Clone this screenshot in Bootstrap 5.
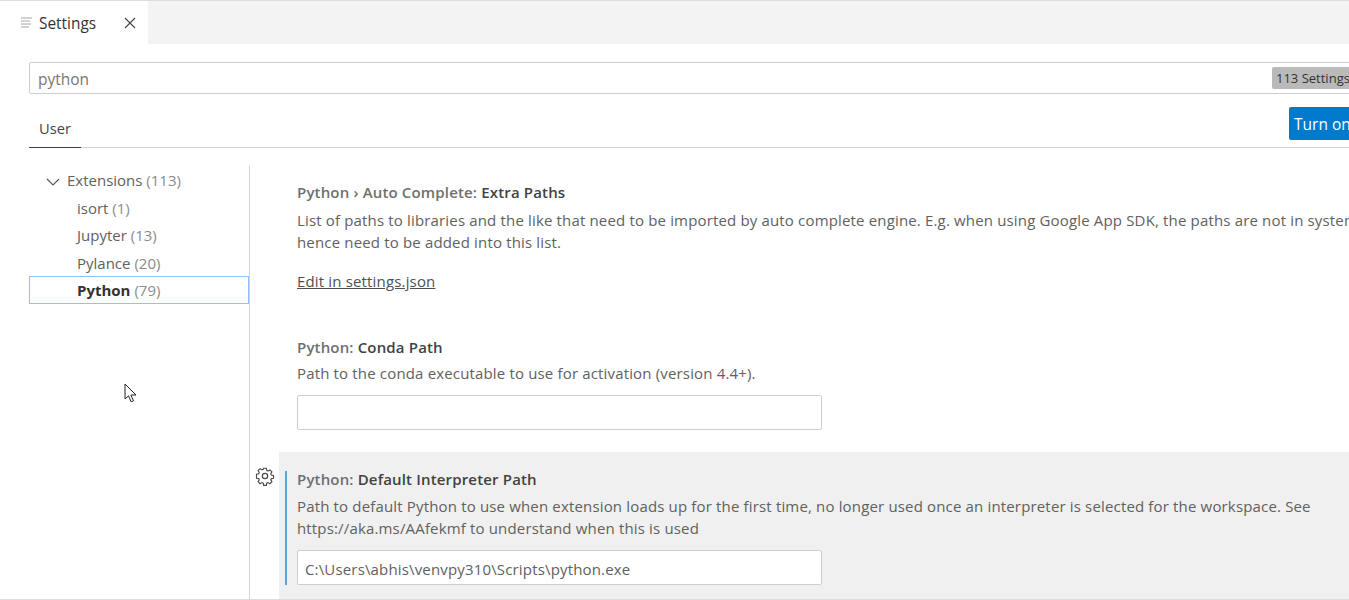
<!DOCTYPE html>
<html lang="en"><head><meta charset="utf-8"><title>Settings</title>
<link href="https://cdn.jsdelivr.net/npm/bootstrap@5.3.0/dist/css/bootstrap.min.css" rel="stylesheet">
<style>
html,body{height:600px;overflow:hidden;background:#fff}
body{font-family:"Open Sans","Noto Sans",sans-serif;font-size:15px;letter-spacing:.16px;color:#616161;width:1349px}
.shell{height:600px;border-top:1px solid #ddd;border-bottom:1px solid #ddd;overflow:hidden;position:relative}
.tabstrip{height:43px;background:#f3f3f3}
.tabitem{width:148px;background:#fff;padding-left:20px;color:#333}
.tabname{margin-left:6px;width:85px;font-size:15.4px;margin-top:2px;letter-spacing:0}
.searchwrap{padding:18px 0 0 29px;width:1500px}
.searchbox{height:32px;border:1px solid #cecece;border-radius:2px;padding:0 8px;color:#767676;font-size:15.5px;width:1400px;letter-spacing:0}
.searchtext{width:0;padding-top:3px}
.countpill{background:#bababa;color:#333;border-radius:2px;font-size:13px;padding:0 4px;margin-left:1234px;line-height:22px;white-space:nowrap}
.tabsrow{margin:13px 0 0 29px;height:41px;border-bottom:1px solid #d4d4d4;position:relative;width:1320px}
.usertab{width:52px;height:41px;border-bottom:1px solid #424242;color:#424242;padding:10px 0 0 10px;font-size:14.7px;letter-spacing:0}
.syncbtn{position:absolute;left:1260px;top:0;width:120px;height:33px;background:#007acc;color:#fff;border-radius:2px;white-space:nowrap;padding:6px 5px;font-size:15.5px;line-height:22px;letter-spacing:0}
.body-row{margin-top:18px}
.treecol{width:220px;margin-left:29px;flex:none;letter-spacing:0}
.treeitem{height:27.5px;line-height:28px;padding-left:48px;white-space:nowrap}
.treeitem.rootitem{padding-left:17px;height:27.5px}
.treeitem em{font-style:normal;color:#8b8b8b}
.treeitem.picked{border:1px solid #90c2f9;color:#333;line-height:26px;padding-left:47px;font-weight:700}
.treeitem.picked em{font-weight:400}
.treechev{margin:0 7px 0 0}
.mainpane{border-left:1px solid #d4d4d4;height:440px;width:1100px;flex:none;padding-left:29px}
.setting{width:1100px;padding-left:18px}
.settitle{font-weight:600;line-height:22px;white-space:nowrap;margin-bottom:4px;color:#6f6f6f}
.settitle b{font-weight:600;color:#424242}
.setdesc{line-height:22px;white-space:nowrap}
.setlink{color:#505050;text-decoration:underline;display:block;margin-top:17px;line-height:22px}
.first{padding-top:15px;height:170px}
.first .settitle{margin-bottom:6px}
.second{height:116px}
.setinput{width:525px;height:35px;border:1px solid #cecece;border-radius:2px;background:#fff;padding:0 7px;line-height:36px;color:#616161;margin-top:11px}
.hotrow{background:#f0f0f0;height:150px;padding:16px 0 0 18px;position:relative}
.hotrow::before{content:"";position:absolute;left:6px;top:19px;bottom:17px;width:2px;background:#5fa4d8}
.hotrow .settitle{margin-bottom:5px}
.gearicon{position:absolute;left:-24px;top:14px}
.arrowptr{position:absolute;left:124px;top:382px}
</style></head><body>
<div class="shell">
 <div class="tabstrip d-flex"><div class="tabitem d-flex align-items-center">
  <svg width="13" height="13" viewBox="0 0 13 13" fill="none" stroke="#c4c4c4" stroke-width="1.4"><path d="M1 2h11M1 5h9M1 8h10M1 11h8"/></svg>
  <span class="tabname">Settings</span>
  <svg width="12" height="12" viewBox="0 0 12 12" fill="none" stroke="#424242" stroke-width="1.1"><path d="M1 1l10 10M11 1L1 11"/></svg>
 </div></div>
 <div class="searchwrap"><div class="searchbox d-flex align-items-center"><span class="searchtext">python</span><span class="countpill">113 Settings Found</span></div></div>
 <div class="tabsrow"><div class="usertab">User</div><div class="syncbtn">Turn on Settings Sync</div></div>
 <div class="body-row d-flex">
  <div class="treecol">
   <div class="treeitem rootitem"><svg class="treechev" width="14" height="14" viewBox="0 0 14 14" fill="none" stroke="#555" stroke-width="1.1"><path d="M1 4l6 6 6-6"/></svg>Extensions <em>(113)</em></div>
   <div class="treeitem">isort <em>(1)</em></div>
   <div class="treeitem">Jupyter <em>(13)</em></div>
   <div class="treeitem">Pylance <em>(20)</em></div>
   <div class="treeitem picked">Python <em>(79)</em></div>
  </div>
  <div class="mainpane">
   <div class="setting first">
    <div class="settitle">Python › Auto Complete: <b>Extra Paths</b></div>
    <div class="setdesc">List of paths to libraries and the like that need to be imported by auto complete engine. E.g. when using Google App SDK, the paths are not in system path,</div>
    <div class="setdesc">hence need to be added into this list.</div>
    <span class="setlink">Edit in settings.json</span>
   </div>
   <div class="setting second">
    <div class="settitle">Python: <b>Conda Path</b></div>
    <div class="setdesc">Path to the conda executable to use for activation (version 4.4+).</div>
    <div class="setinput"></div>
   </div>
   <div class="hotrow">
    <svg class="gearicon" width="20" height="20" viewBox="0 0 18 18" fill="none" stroke="#4a4a4a" stroke-width="1.15"><circle cx="9" cy="9" r="2.4"/><path d="M7.6 1.2h2.8l.4 2.2 1.3.6 1.9-1.2 2 2-1.2 1.9.6 1.3 2.2.4v2.8l-2.2.4-.6 1.3 1.2 1.9-2 2-1.9-1.2-1.3.6-.4 2.2H7.6l-.4-2.2-1.3-.6-1.9 1.2-2-2 1.2-1.9-.6-1.3-2.2-.4V7.2l2.2-.4.6-1.3-1.2-1.9 2-2 1.9 1.2 1.3-.6z" transform="translate(1 1) scale(.89)"/></svg>
    <div class="settitle">Python: <b>Default Interpreter Path</b></div>
    <div class="setdesc">Path to default Python to use when extension loads up for the first time, no longer used once an interpreter is selected for the workspace. See</div>
    <div class="setdesc">https://aka.ms/AAfekmf to understand when this is used</div>
    <div class="setinput">C:\Users\abhis\venvpy310\Scripts\python.exe</div>
   </div>
  </div>
 </div>
 <svg class="arrowptr" width="14" height="21" viewBox="0 0 14 21"><path d="M1 1v15l3.5-3.2 2.6 6 2.4-1-2.6-5.8H12z" fill="#fff" stroke="#222" stroke-width="1"/></svg>
</div>
</body></html>
